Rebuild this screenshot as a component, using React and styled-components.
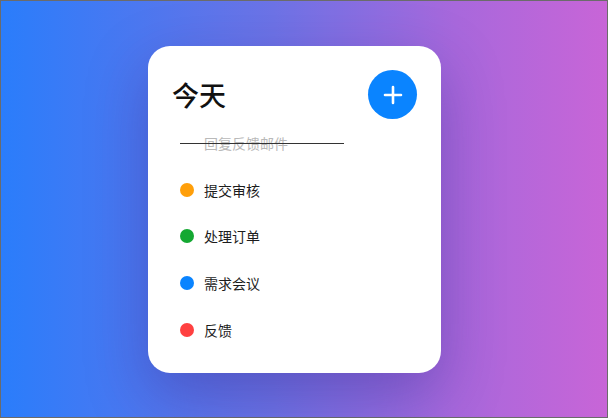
import React from "react";
import styled, { createGlobalStyle } from "styled-components";

const tasks = [
  { id: 1, text: "回复反馈邮件", color: "#8e8e93", done: true },
  { id: 2, text: "提交审核", color: "#ff9f0a" },
  { id: 3, text: "处理订单", color: "#14a832" },
  { id: 4, text: "需求会议", color: "#0a84ff" },
  { id: 5, text: "反馈", color: "#ff4040" },
];

const App = () => {
  return (
    <Page>
      <GlobalStyle />
      <Card>
        <Header>
          <Title>今天</Title>
          <AddButton aria-label="add">
            <svg width="20" height="20" viewBox="0 0 20 20">
              <path
                d="M10 2v16M2 10h16"
                stroke="#fff"
                strokeWidth="2.6"
                strokeLinecap="round"
              />
            </svg>
          </AddButton>
        </Header>
        <List>
          {tasks.map((t) => (
            <Item key={t.id} $done={t.done}>
              <Dot $color={t.color} $hidden={t.done} />
              <Label $done={t.done}>{t.text}</Label>
            </Item>
          ))}
        </List>
      </Card>
    </Page>
  );
};

export default App;

const GlobalStyle = createGlobalStyle`
  html, body {
    margin: 0;
    padding: 0;
  }
  * {
    box-sizing: border-box;
  }
`;

const Page = styled.main`
  width: 100vw;
  height: 100vh;
  border: 1px solid #6b6b6b;
  background: linear-gradient(90deg, #2a7dfb 0%, #6d73e6 45%, #a868dc 75%, #c865d7 100%);
  display: flex;
  justify-content: center;
  padding-top: 45px;
  font-family: "Noto Sans CJK SC", "Noto Sans", sans-serif;
`;

const Card = styled.section`
  width: 293px;
  height: 327px;
  margin-right: 19px;
  background: #fff;
  border-radius: 22px;
  padding: 24px 24px 18px;
  box-shadow: 0 22px 60px rgba(50, 30, 130, 0.35);
  display: flex;
  flex-direction: column;
`;

const Header = styled.header`
  display: flex;
  justify-content: space-between;
  align-items: center;
  height: 49px;
`;

const Title = styled.h1`
  margin: 0;
  font-size: 27px;
  font-weight: 500;
  color: #111;
  line-height: 1;
`;

const AddButton = styled.button`
  width: 49px;
  height: 49px;
  border: none;
  border-radius: 50%;
  background: #0a84ff;
  display: flex;
  align-items: center;
  justify-content: center;
  padding: 0;
  cursor: pointer;
`;

const List = styled.ul`
  list-style: none;
  margin: 1px 0 0;
  padding: 0;
`;

const Item = styled.li`
  position: relative;
  height: 46.6px;
  display: flex;
  align-items: center;
  padding-left: 8px;
  gap: 10px;

  ${({ $done }) =>
    $done &&
    `
    &::after {
      content: "";
      position: absolute;
      left: 8px;
      top: 50%;
      width: 164px;
      height: 1px;
      background: #333;
    }
  `}
`;

const Dot = styled.span`
  width: 14px;
  height: 14px;
  border-radius: 50%;
  flex-shrink: 0;
  background: ${({ $color }) => $color};
  visibility: ${({ $hidden }) => ($hidden ? "hidden" : "visible")};
`;

const Label = styled.span`
  font-size: 14px;
  color: ${({ $done }) => ($done ? "#b9b9b9" : "#1c1c1c")};
  line-height: 1;
`;
